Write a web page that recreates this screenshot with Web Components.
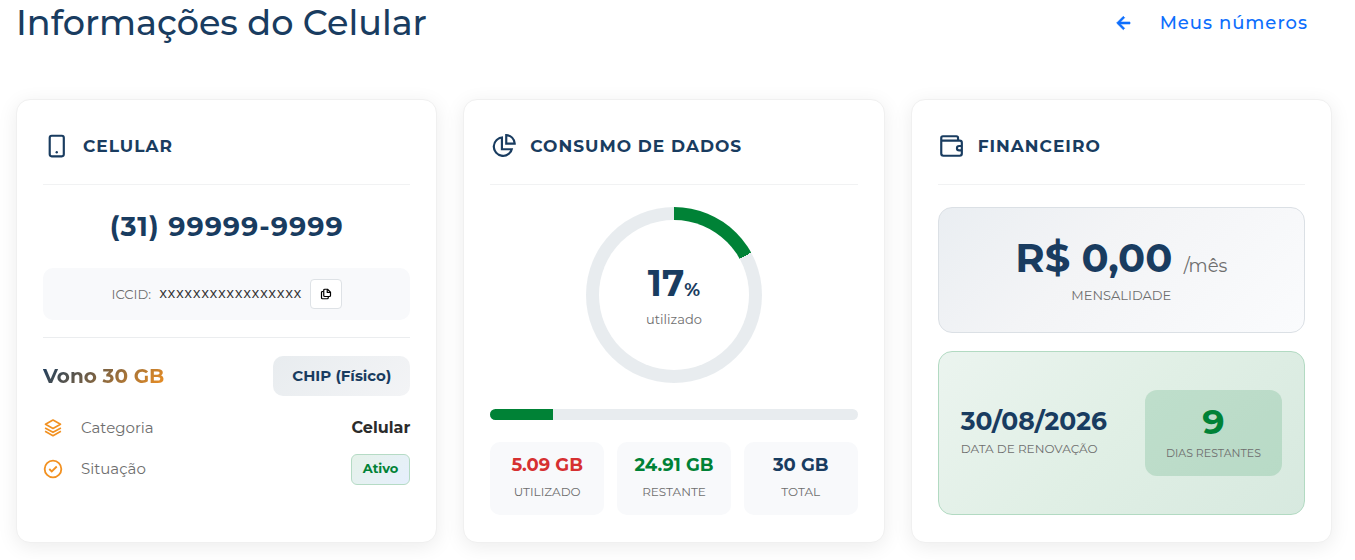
<!DOCTYPE html>
<html lang="pt-BR">
<head>
<meta charset="utf-8">
<meta name="viewport" content="width=device-width, initial-scale=1">
<title>Informações do Celular</title>
<style>
  :root { --navy: #193c60; --green: #008236; --red: #d63031; --orange: #f29121; --muted: #6e6e6e; --soft: #f8f9fb; --track: #e8ecef; }
  body { margin: 0; background: #fff; color: #212529; font-family: Montserrat, Inter, "Liberation Sans", sans-serif; }
</style>
</head>
<body>
<line-page></line-page>

<script>
const ICONS = {
  back: `<path d="M12.7 17.3 8.4 13H18v-2H8.4l4.3-4.3-1.4-1.4L4.6 12l6.7 6.7z" stroke="currentColor" stroke-width=".6"/>`,
  phone: `<rect x="6.2" y="2.5" width="13" height="19" rx="1.8" fill="none" stroke="currentColor" stroke-width="2"/><circle cx="12.7" cy="17.8" r="1.1"/>`,
  pie: `<path d="M12 3.1A9.5 9.5 0 1 0 21.4 14H12zM10 5.3V16h8.7A7.5 7.5 0 1 1 10 5.3z"/><path d="M14 1v9.8h9.8V9.8A9 9 0 0 0 15 1zm2 2.2a7 7 0 0 1 5.6 5.6H16z"/>`,
  wallet: `<path d="M17 2H4.500A2.500 2.500 0 0 0 2 4.500V19a3 3 0 0 0 3 3h15a3 3 0 0 0 3-3V9a3 3 0 0 0-3-3h-.5V4.500A2.500 2.500 0 0 0 17 2zM4.500 4H17a.5.5 0 0 1 .5.5V6H4V4.500a.5.5 0 0 1 .5-.5zM4 8h16a1 1 0 0 1 1 1v2h-1.500a3 3 0 0 0 0 6H21v2a1 1 0 0 1-1 1H5a1 1 0 0 1-1-1zm17 5v2h-1.500a1 1 0 0 1 0-2z"/>`,
  copy: `<g fill="none" stroke="currentColor" stroke-width="2.4" stroke-linejoin="round"><path d="M15 2.500H9.500a2 2 0 0 0-2 2V15a2 2 0 0 0 2 2H19a2 2 0 0 0 2-2V8.500z"/><path d="M14.500 3v6H21"/><path d="M7 7H5a2 2 0 0 0-2 2v10.500a2 2 0 0 0 2 2h9.500a2 2 0 0 0 2-2V18"/></g>`,
  layers: `<g fill="none" stroke="currentColor" stroke-width="2" stroke-linejoin="round"><path d="M12 2.500 3 7.500l9 5 9-5z"/><path d="m2.500 12 9.500 5.200 9.500-5.200M2.500 16l9.500 5.200 9.500-5.200"/></g>`,
  check: `<g fill="none" stroke="currentColor" stroke-width="2.200"><circle cx="12" cy="12" r="10"/><path d="m7.500 12 3 3 6-6"/></g>`
};

class LineIcon extends HTMLElement {
  static observedAttributes = ["name"];

  constructor() {
    super();
    this.attachShadow({ mode: "open" });
    this.shadowRoot.innerHTML = `
      <style>
        :host { display: inline-block; flex: none; width: var(--icon-size, 24px); height: var(--icon-size, 24px); }
        svg { display: block; width: 100%; height: 100%; fill: currentColor; }
      </style>
      <svg viewBox="0 0 24 24" aria-hidden="true"></svg>
    `;
  }

  attributeChangedCallback(attr, old, value) {
    this.shadowRoot.querySelector("svg").innerHTML = ICONS[value] || "";
  }
}
customElements.define("line-icon", LineIcon);

class InfoCard extends HTMLElement {
  constructor() {
    super();
    this.attachShadow({ mode: "open" });
    this.shadowRoot.innerHTML = `
      <style>
        :host { display: flex; flex-direction: column; box-sizing: border-box; min-width: 0; padding: 26px 26px 27px; background: #fff; border: 1px solid #f0f0f0; border-radius: 14px; box-shadow: 0 4px 20px rgba(0,0,0,.08); }
        header { display: flex; align-items: center; gap: 14px; height: 40px; padding-bottom: 18px; border-bottom: 1px solid #f1f2f3; color: var(--navy); --icon-size: 26px; }
        h2 { margin: 0; font-size: 17px; line-height: 24px; font-weight: 700; letter-spacing: 1px; }
        .body { display: flex; flex-direction: column; flex: 1; }
      </style>
      <header><line-icon></line-icon><h2></h2></header>
      <div class="body"><slot></slot></div>
    `;
  }

  connectedCallback() {
    this.shadowRoot.querySelector("line-icon").setAttribute("name", this.getAttribute("icon"));
    this.shadowRoot.querySelector("h2").textContent = this.getAttribute("heading");
  }
}
customElements.define("info-card", InfoCard);

class DetailRow extends HTMLElement {
  constructor() {
    super();
    this.attachShadow({ mode: "open" });
    this.shadowRoot.innerHTML = `
      <style>
        :host { display: flex; align-items: center; gap: 18px; min-height: 32px; font-size: 15px; line-height: 24px; --icon-size: 20px; }
        .label { flex: 1; color: var(--muted); }
        .value { font-size: 16px; font-weight: 700; color: #2b2b2b; }
      </style>
      <slot name="icon"></slot>
      <span class="label"><slot name="label"></slot></span>
      <span class="value"><slot></slot></span>
    `;
  }
}
customElements.define("detail-row", DetailRow);

class PhonePanel extends HTMLElement {
  constructor() {
    super();
    this.attachShadow({ mode: "open" });
    this.shadowRoot.innerHTML = `
      <style>
        :host { display: block; }
        .number { margin: 22px 0 21px; text-align: center; color: var(--navy); font-size: 27px; line-height: 40px; font-weight: 700; letter-spacing: 1px; }
        .iccid { display: flex; align-items: center; justify-content: center; gap: 8px; height: 52px; border-radius: 10px; background: var(--soft); font-size: 13px; line-height: 20px; color: var(--muted); }
        code { font-family: "Liberation Mono", monospace; font-size: 14px; color: #333; }
        button { display: flex; align-items: center; justify-content: center; width: 32px; height: 30px; padding: 0; border: 1px solid #dee2e6; border-radius: 4px; background: #fff; color: #000; cursor: pointer; --icon-size: 12px; }
        .plan { display: flex; align-items: center; justify-content: space-between; margin-top: 17px; padding-top: 18px; border-top: 1px solid #ebedef; }
        h3 { margin: 0; font-size: 20px; line-height: 28px; font-weight: 700; background: linear-gradient(135deg, var(--navy), var(--orange)); background-clip: text; -webkit-background-clip: text; color: transparent; }
        .chip { padding: 8px 19px; border-radius: 10px; background: linear-gradient(135deg, #e8ecef, #f3f4f6); color: var(--navy); font-size: 15px; line-height: 24px; font-weight: 700; }
        .details { display: grid; gap: 9px; margin-top: 16px; }
        line-icon[slot] { color: var(--orange); }
        .status { display: block; box-sizing: border-box; height: 31px; padding: 2px 11px; border: 1px solid #b5dbc5; border-radius: 6px; background: linear-gradient(135deg, #e5f2e9, #e6effd); color: var(--green); font-size: 13px; line-height: 22px; }
      </style>
      <div class="number">(31) 99999-9999</div>
      <div class="iccid">
        <span>ICCID:</span><code>xxxxxxxxxxxxxxxxx</code>
        <button type="button" aria-label="Copiar ICCID"><line-icon name="copy"></line-icon></button>
      </div>
      <div class="plan"><h3>Vono 30 GB</h3><span class="chip">CHIP (Físico)</span></div>
      <div class="details">
        <detail-row><line-icon slot="icon" name="layers"></line-icon><span slot="label">Categoria</span>Celular</detail-row>
        <detail-row><line-icon slot="icon" name="check"></line-icon><span slot="label">Situação</span><span class="status">Ativo</span></detail-row>
      </div>
    `;
  }

  connectedCallback() {
    const code = this.shadowRoot.querySelector("code");
    this.shadowRoot.querySelector("button").onclick = () => navigator.clipboard?.writeText(code.textContent);
  }
}
customElements.define("phone-panel", PhonePanel);

class UsageStat extends HTMLElement {
  constructor() {
    super();
    this.attachShadow({ mode: "open" });
    this.shadowRoot.innerHTML = `
      <style>
        :host { display: block; box-sizing: border-box; padding: 9px 4px 10px; border-radius: 10px; background: var(--soft); text-align: center; }
        .value { color: var(--stat-color, var(--navy)); font-size: 18px; line-height: 28px; font-weight: 700; }
        .label { color: var(--muted); font-size: 12px; line-height: 26px; text-transform: uppercase; }
      </style>
      <div class="value"><slot></slot></div>
      <div class="label"><slot name="label"></slot></div>
    `;
  }
}
customElements.define("usage-stat", UsageStat);

class UsagePanel extends HTMLElement {
  constructor() {
    super();
    this.attachShadow({ mode: "open" });
    this.shadowRoot.innerHTML = `
      <style>
        :host { display: block; }
        .ring { display: grid; place-items: center; width: 176px; height: 176px; margin: 22px auto 26px; border-radius: 50%; background: conic-gradient(var(--green) 0 17%, var(--track) 17%); }
        .hole { display: flex; flex-direction: column; align-items: center; justify-content: center; gap: 6px; box-sizing: border-box; width: 150px; height: 150px; padding-top: 6px; border-radius: 50%; background: #fff; }
        .percent { color: var(--navy); font-size: 36px; line-height: 36px; font-weight: 700; }
        small { font-size: 18px; line-height: 1; }
        .caption { color: var(--muted); font-size: 13px; line-height: 24px; }
        .bar { height: 11px; border-radius: 6px; background: var(--track); overflow: hidden; }
        .bar div { width: 17%; height: 100%; background: var(--green); }
        .stats { display: grid; grid-template-columns: repeat(3, 1fr); gap: 13px; margin-top: 22px; }
        .used { --stat-color: var(--red); }
        .left { --stat-color: var(--green); }
      </style>
      <div class="ring"><div class="hole">
        <div class="percent">17<small>%</small></div>
        <div class="caption">utilizado</div>
      </div></div>
      <div class="bar" role="progressbar" aria-label="Consumo de dados" aria-valuenow="17" aria-valuemin="0" aria-valuemax="100"><div></div></div>
      <div class="stats">
        <usage-stat class="used">5.09 GB<span slot="label">Utilizado</span></usage-stat>
        <usage-stat class="left">24.91 GB<span slot="label">Restante</span></usage-stat>
        <usage-stat>30 GB<span slot="label">Total</span></usage-stat>
      </div>
    `;
  }
}
customElements.define("usage-panel", UsagePanel);

class BillingPanel extends HTMLElement {
  constructor() {
    super();
    this.attachShadow({ mode: "open" });
    this.shadowRoot.innerHTML = `
      <style>
        :host { display: flex; flex-direction: column; flex: 1; gap: 18px; padding-top: 22px; }
        .fee, .renewal { box-sizing: border-box; border: 1px solid #dbe0e5; border-radius: 14px; }
        .fee { padding: 25px 22px; text-align: center; background: linear-gradient(135deg, #eaeef2, #f3f4f6 40%, #fafbfd); }
        .price { color: var(--navy); font-size: 40px; line-height: 50px; font-weight: 700; }
        .price small { color: var(--muted); font-size: 18px; line-height: 1; font-weight: 400; }
        .label { color: var(--muted); font-size: 13px; line-height: 24px; text-transform: uppercase; }
        .renewal { display: flex; align-items: center; justify-content: space-between; flex: 1; min-height: 164px; padding: 22px; border-color: #b2dac2; background: linear-gradient(135deg, #ebf4ef, #e0efe5 50%, #d7e9df); }
        .renewal .label { font-size: 12px; }
        .date { color: var(--navy); font-size: 25px; line-height: 32px; font-weight: 700; }
        .days { padding: 12px 21px; border-radius: 12px; background: rgba(0,130,54,.15); text-align: center; }
        .count { color: var(--green); font-size: 35px; line-height: 40px; font-weight: 700; }
        .days .label { font-size: 11px; line-height: 22px; }
      </style>
      <div class="fee">
        <div class="price">R$ 0,00 <small>/mês</small></div>
        <div class="label">Mensalidade</div>
      </div>
      <div class="renewal">
        <div><div class="date">30/08/2026</div><div class="label">Data de renovação</div></div>
        <div class="days"><div class="count">9</div><div class="label">Dias restantes</div></div>
      </div>
    `;
  }
}
customElements.define("billing-panel", BillingPanel);

class LinePage extends HTMLElement {
  constructor() {
    super();
    this.attachShadow({ mode: "open" });
    this.shadowRoot.innerHTML = `
      <style>
        :host { display: block; padding: 0 23px 17px 16px; }
        .top { display: flex; align-items: center; justify-content: space-between; margin-bottom: 53px; }
        h1 { margin: 0; color: var(--navy); font-size: 35px; line-height: 46px; font-weight: 500; }
        a { display: flex; align-items: center; gap: 24px; margin-right: 24px; color: #0d6efd; font-size: 18px; line-height: 24px; font-weight: 500; letter-spacing: 1px; text-decoration: none; --icon-size: 24px; }
        .cards { display: grid; grid-template-columns: repeat(3, minmax(0, 1fr)); gap: 26px; }
        @media (max-width: 900px) { .cards { grid-template-columns: 1fr; } }
      </style>
      <div class="top">
        <h1>Informações do Celular</h1>
        <a href="#"><line-icon name="back"></line-icon>Meus números</a>
      </div>
      <main class="cards">
        <info-card icon="phone" heading="CELULAR"><phone-panel></phone-panel></info-card>
        <info-card icon="pie" heading="CONSUMO DE DADOS"><usage-panel></usage-panel></info-card>
        <info-card icon="wallet" heading="FINANCEIRO"><billing-panel></billing-panel></info-card>
      </main>
    `;
  }
}
customElements.define("line-page", LinePage);
</script>
</body>
</html>
